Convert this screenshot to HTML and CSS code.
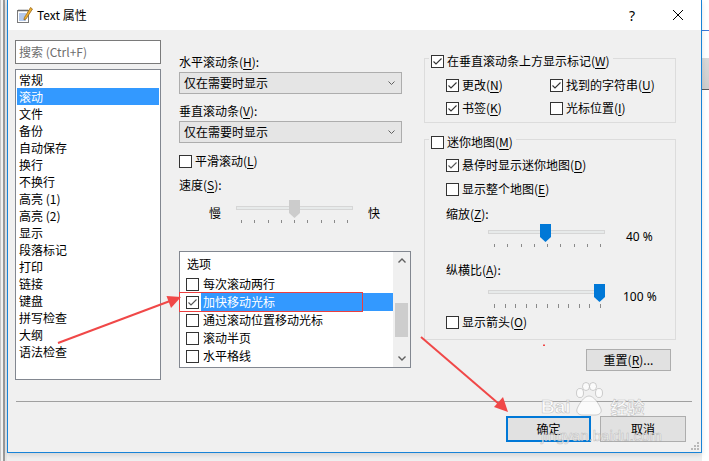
FILE: index.html
```html
<!DOCTYPE html>
<html lang="zh-CN">
<head>
<meta charset="utf-8">
<title>Text 属性</title>
<link rel="stylesheet" href="styles.css">
</head>
<body>
<div class="screen">
  <div class="bg-left"></div>
  <div class="dialog">
    <div class="titlebar">
      <svg class="app-icon" width="17" height="16" viewBox="0 0 17 16">
        <rect x="1.5" y="3.5" width="11" height="12" fill="#fff" stroke="#7a7a7a"/>
        <line x1="3" y1="7" x2="10" y2="7" stroke="#6b93d6"/>
        <line x1="3" y1="9" x2="9" y2="9" stroke="#6b93d6"/>
        <line x1="3" y1="11" x2="8" y2="11" stroke="#6b93d6"/>
        <line x1="3" y1="13" x2="10" y2="13" stroke="#6b93d6"/>
        <path d="M3 2.5v2M5 2.5v2M7 2.5v2M9 2.5v2M11 2.5v2" stroke="#555"/>
        <polygon points="14.5,0.5 16.5,2 10,12 8,13 8.3,10.8" fill="#f0b030" stroke="#8a5a10" stroke-width="0.7"/>
      </svg>
      <span class="title">Text 属性</span>
      <span class="cap-btn help">?</span>
      <span class="cap-btn close">
        <svg width="10" height="10" viewBox="0 0 10 10"><path d="M0 0L10 10M10 0L0 10" stroke="#000" stroke-width="1"/></svg>
      </span>
    </div>

    <div class="main">
      <div class="col-left">
        <div class="search">搜索 (Ctrl+F)</div>
        <ul class="catlist">
          <li>常规</li>
          <li class="sel">滚动</li>
          <li>文件</li>
          <li>备份</li>
          <li>自动保存</li>
          <li>换行</li>
          <li>不换行</li>
          <li>高亮 (1)</li>
          <li>高亮 (2)</li>
          <li>显示</li>
          <li>段落标记</li>
          <li>打印</li>
          <li>链接</li>
          <li>键盘</li>
          <li>拼写检查</li>
          <li>大纲</li>
          <li>语法检查</li>
        </ul>
      </div>

      <div class="col-mid">
        <div class="lbl">水平滚动条(<u>H</u>):</div>
        <div class="combo"><span>仅在需要时显示</span>
          <svg width="7" height="4" viewBox="0 0 7 4"><polyline points="0.5,0.5 3.5,3.5 6.5,0.5" fill="none" stroke="#606060"/></svg>
        </div>
        <div class="lbl mt9">垂直滚动条(<u>V</u>):</div>
        <div class="combo"><span>仅在需要时显示</span>
          <svg width="7" height="4" viewBox="0 0 7 4"><polyline points="0.5,0.5 3.5,3.5 6.5,0.5" fill="none" stroke="#606060"/></svg>
        </div>
        <div class="chk smooth"><span class="box"></span>平滑滚动(<u>L</u>)</div>
        <div class="lbl speed">速度(<u>S</u>):</div>
        <div class="speed-row">
          <span class="end slow">慢</span>
          <div class="slider">
            <div class="track"></div>
            <svg class="thumb thumb-mid" width="11" height="18" viewBox="0 0 11 18"><polygon points="0,0 11,0 11,13 5.5,18 0,13" fill="#cccccc"/></svg>
            <div class="ticks"><i></i><i></i><i></i><i></i><i></i><i></i><i></i><i></i><i></i></div>
          </div>
          <span class="end fast">快</span>
        </div>
        <div class="options">
          <div class="opt-list">
            <div class="opt-head">选项</div>
            <div class="opt"><span class="box"></span><span class="opt-text">每次滚动两行</span></div>
            <div class="opt"><span class="box"><svg width="11" height="11" viewBox="0 0 11 11"><polyline points="1.5,5.5 4,8 9.5,2.5" fill="none" stroke="#555" stroke-width="1.1"/></svg></span><span class="opt-text sel">加快移动光标</span></div>
            <div class="opt"><span class="box"></span><span class="opt-text">通过滚动位置移动光标</span></div>
            <div class="opt"><span class="box"></span><span class="opt-text">滚动半页</span></div>
            <div class="opt"><span class="box"></span><span class="opt-text">水平格线</span></div>
          </div>
          <div class="vscroll">
            <div class="arrow"><svg width="8" height="5" viewBox="0 0 8 5"><polyline points="0.5,4.5 4,1 7.5,4.5" fill="none" stroke="#606060" stroke-width="1.4"/></svg></div>
            <div class="vthumb"></div>
            <div class="arrow down"><svg width="8" height="5" viewBox="0 0 8 5"><polyline points="0.5,0.5 4,4 7.5,0.5" fill="none" stroke="#606060" stroke-width="1.4"/></svg></div>
          </div>
        </div>
      </div>

      <div class="col-right">
        <div class="group g1">
          <div class="chk legend"><span class="box"><svg width="11" height="11" viewBox="0 0 11 11"><polyline points="1.5,5.5 4,8 9.5,2.5" fill="none" stroke="#333" stroke-width="1.1"/></svg></span>在垂直滚动条上方显示标记(<u>W</u>)</div>
          <div class="grid2">
            <div class="chk"><span class="box"><svg width="11" height="11" viewBox="0 0 11 11"><polyline points="1.5,5.5 4,8 9.5,2.5" fill="none" stroke="#333" stroke-width="1.1"/></svg></span>更改(<u>N</u>)</div>
            <div class="chk"><span class="box"><svg width="11" height="11" viewBox="0 0 11 11"><polyline points="1.5,5.5 4,8 9.5,2.5" fill="none" stroke="#333" stroke-width="1.1"/></svg></span>找到的字符串(<u>U</u>)</div>
            <div class="chk"><span class="box"><svg width="11" height="11" viewBox="0 0 11 11"><polyline points="1.5,5.5 4,8 9.5,2.5" fill="none" stroke="#333" stroke-width="1.1"/></svg></span>书签(<u>K</u>)</div>
            <div class="chk"><span class="box"></span>光标位置(<u>I</u>)</div>
          </div>
        </div>

        <div class="group g2">
          <div class="chk legend"><span class="box"></span>迷你地图(<u>M</u>)</div>
          <div class="chk hover-row"><span class="box"><svg width="11" height="11" viewBox="0 0 11 11"><polyline points="1.5,5.5 4,8 9.5,2.5" fill="none" stroke="#555" stroke-width="1.1"/></svg></span>悬停时显示迷你地图(<u>D</u>)</div>
          <div class="chk whole-row"><span class="box"></span>显示整个地图(<u>E</u>)</div>
          <div class="lbl zoom-lbl">缩放(<u>Z</u>):</div>
          <div class="rslider-row">
            <div class="rslider">
              <div class="track"></div>
              <svg class="thumb thumb-zoom" width="11" height="18" viewBox="0 0 11 18"><polygon points="0,0 11,0 11,13 5.5,18 0,13" fill="#0078d7"/></svg>
              <div class="ticks"><i></i><i></i><i></i><i></i><i></i><i></i><i></i><i></i><i></i></div>
            </div>
            <span class="val">40 %</span>
          </div>
          <div class="lbl ratio-lbl">纵横比(<u>A</u>):</div>
          <div class="rslider-row ratio-row">
            <div class="rslider">
              <div class="track"></div>
              <svg class="thumb thumb-ratio" width="11" height="18" viewBox="0 0 11 18"><polygon points="0,0 11,0 11,13 5.5,18 0,13" fill="#0078d7"/></svg>
              <div class="ticks ticks-tall"><i></i><i></i><i></i><i></i><i></i><i></i><i></i><i></i><i></i><i></i><i></i></div>
            </div>
            <span class="val val-100">100 %</span>
          </div>
          <div class="chk arrow-row"><span class="box"></span>显示箭头(<u>O</u>)</div>
        </div>

        <div class="reset-row"><button class="btn reset">重置(<u>R</u>)...</button></div>
      </div>
    </div>

    <div class="sep"></div>
    <div class="buttons">
      <button class="btn default">确定</button>
      <button class="btn cancel">取消</button>
    </div>
    <svg class="grip" width="9" height="9" viewBox="0 0 9 9">
      <rect x="7" y="1" width="2" height="2" fill="#b8b8b8"/>
      <rect x="4" y="4" width="2" height="2" fill="#b8b8b8"/>
      <rect x="7" y="4" width="2" height="2" fill="#b8b8b8"/>
      <rect x="1" y="7" width="2" height="2" fill="#b8b8b8"/>
      <rect x="4" y="7" width="2" height="2" fill="#b8b8b8"/>
      <rect x="7" y="7" width="2" height="2" fill="#b8b8b8"/>
    </svg>
  </div>
  <div class="bg-right"></div>

  <div class="watermark">
    <div class="wm-top">
      <span class="wm-bai">Bai</span>
      <svg class="wm-paw" width="32" height="34" viewBox="0 0 32 34">
        <g fill="rgba(255,255,255,0.75)" stroke="rgba(150,150,150,0.55)" stroke-width="0.8">
          <ellipse cx="7" cy="11" rx="3.5" ry="4.5"/>
          <ellipse cx="13" cy="4.5" rx="3.5" ry="4"/>
          <ellipse cx="20" cy="4.5" rx="3.5" ry="4"/>
          <ellipse cx="26" cy="11" rx="3.5" ry="4.5"/>
          <path d="M16 14c-5 0-10 8-12 13-1 4 2 6 6 6h12c4 0 7-2 6-6-2-5-7-13-12-13z"/>
        </g>
      </svg>
      <span class="wm-jy">经验</span>
    </div>
    <div class="wm-url">jingyan.baidu.com</div>
  </div>

  <svg class="annot" width="709" height="461" viewBox="0 0 709 461">
    <rect x="179.5" y="292.5" width="183" height="19" fill="none" stroke="#ec3f3f" stroke-width="1"/>
    <line x1="58" y1="343" x2="170" y2="301" stroke="#f04848" stroke-width="2"/>
    <polygon points="181,297 166.5,296 171,308" fill="#f04848"/>
    <line x1="421" y1="337" x2="499" y2="404" stroke="#f04848" stroke-width="2"/>
    <polygon points="508,412 494,407 503,397" fill="#f04848"/>
    <rect x="543" y="344.5" width="2" height="1.5" fill="#f04848"/>
  </svg>
</div>
</body>
</html>
```

FILE: styles.css
```css
* { box-sizing: border-box; }

html, body {
  margin: 0;
  padding: 0;
}

body {
  width: 709px;
  height: 461px;
  overflow: hidden;
  background: #efefef;
  font-family: "Noto Sans CJK SC", "Noto Sans", sans-serif;
  font-size: 12px;
  color: #000;
}

u { text-decoration: underline; text-underline-offset: 2px; }

.screen {
  position: relative;
  display: flex;
  width: 709px;
  height: 461px;
  background: #efefef;
}

.bg-left {
  width: 7px;
  height: 461px;
  background: linear-gradient(to right, #c4c4c4 0, #c4c4c4 1px, #f2f2f2 1px, #f2f2f2 3px, #9a9a9a 3px, #9a9a9a 5px, #e6e6e6 5px);
}

.bg-right {
  width: 7px;
  height: 461px;
  background: linear-gradient(to bottom, #ffffff 0, #ffffff 30px, #3b78d8 30px, #3b78d8 31px, #ffffff 31px, #ffffff 58px, #d8d8d8 58px, #cdcdcd 89px, #5a5a5a 89px, #5a5a5a 90px, #ffffff 90px);
}

.dialog {
  position: relative;
  width: 695px;
  height: 453px;
  background: #f0f0f0;
  border: 1px solid #1883d7;
  border-top: none;
  display: flex;
  flex-direction: column;
  box-shadow: 0 2px 5px rgba(0, 0, 0, 0.12);
}

/* ---------- title bar ---------- */
.titlebar {
  height: 30px;
  background: #fff;
  display: flex;
  align-items: center;
  flex: none;
}

.app-icon { margin-left: 8px; flex: none; }

.title {
  margin-left: 4px;
  line-height: 16px;
  font-size: 12px;
}

.cap-btn {
  width: 46px;
  height: 30px;
  display: flex;
  align-items: center;
  justify-content: center;
}

.help {
  margin-left: auto;
  font-family: "Noto Sans", sans-serif;
  font-size: 14px;
}

/* ---------- main area ---------- */
.main {
  display: flex;
  height: 371px;
  padding-left: 7px;
  flex: none;
}

.col-left {
  width: 146px;
  padding-top: 10px;
  flex: none;
}

.search {
  height: 24px;
  border: 1px solid #7a7a7a;
  background: #fff;
  padding-left: 3px;
  line-height: 22px;
  color: #6d6d6d;
}

.catlist {
  margin: 5px 0 0;
  padding: 1px;
  list-style: none;
  height: 311px;
  border: 1px solid #828790;
  background: #fff;
}

.catlist li {
  height: 17px;
  line-height: 17px;
  padding-left: 2px;
  white-space: nowrap;
}

.catlist li.sel {
  background: #3399ff;
  color: #fff;
}

/* middle column */
.col-mid {
  width: 232px;
  margin-left: 18px;
  padding-top: 24px;
  flex: none;
}

.lbl {
  height: 16px;
  line-height: 16px;
}

.mt9 { margin-top: 9px; }

.combo {
  margin-top: 2px;
  width: 223px;
  height: 22px;
  background: #e5e5e5;
  border: 1px solid #adadad;
  display: flex;
  align-items: center;
  justify-content: space-between;
  padding: 0 6px 0 4px;
  line-height: 16px;
}

.chk {
  display: flex;
  align-items: center;
  height: 16px;
  line-height: 16px;
  white-space: nowrap;
}

.box {
  width: 13px;
  height: 13px;
  border: 1px solid #333;
  background: #fff;
  margin-right: 3px;
  flex: none;
  display: flex;
}

.smooth { margin-top: 10px; }
.speed { margin-top: 8px; }

.speed-row {
  display: flex;
  height: 33px;
}

.end {
  line-height: 16px;
  padding-top: 12px;
  width: 12px;
}

.slow { margin-left: 30px; }
.fast { margin-left: 15px; }

.slider {
  position: relative;
  width: 117px;
  height: 33px;
  margin-left: 15px;
}

.track {
  margin-top: 13px;
  height: 4px;
  background: #e7eaea;
  border: 1px solid #d6d6d6;
}

.ticks {
  display: flex;
  justify-content: space-between;
  margin: 10px 0 0 5px;
  width: 107px;
}

.ticks i {
  display: block;
  width: 1px;
  height: 3px;
  background: #8a8a8a;
}

.thumb { position: absolute; }
.thumb-mid { left: 53px; top: 7px; }

.options {
  margin-top: 25px;
  width: 232px;
  height: 117px;
  border: 1px solid #828790;
  background: #fff;
  display: flex;
}

.opt-list {
  flex: 1;
  padding-top: 3px;
}

.opt-head {
  line-height: 18px;
  height: 18px;
  padding-left: 7px;
  margin-bottom: 2px;
}

.opt {
  display: flex;
  align-items: center;
  height: 18px;
  padding-left: 6px;
}

.opt .box { margin-right: 2px; }

.opt-text {
  flex: 1;
  height: 18px;
  line-height: 18px;
  padding-left: 2px;
  white-space: nowrap;
}

.opt-text.sel {
  background: #3399ff;
  color: #fff;
}

.vscroll {
  width: 17px;
  background: #f0f0f0;
  display: flex;
  flex-direction: column;
  align-items: center;
  flex: none;
}

.arrow {
  height: 17px;
  display: flex;
  align-items: center;
  justify-content: center;
  flex: none;
}

.arrow.down { margin-top: auto; }

.vthumb {
  margin-top: 34px;
  width: 13px;
  height: 34px;
  background: #cdcdcd;
}

/* right column */
.col-right {
  width: 252px;
  margin-left: 13px;
  padding-top: 28px;
  flex: none;
}

.group {
  border: 1px solid #dcdcdc;
  padding-left: 21px;
}

.legend {
  margin-top: -6px;
  margin-left: -17px;
  padding: 0 3px 0 2px;
  width: max-content;
  background: #f0f0f0;
}

.g1 { padding-bottom: 6px; }

.grid2 {
  display: grid;
  grid-template-columns: 104px auto;
  row-gap: 7px;
  margin-top: 8px;
}

.g2 {
  margin-top: 16px;
  padding-bottom: 9px;
}

.hover-row { margin-top: 7px; }
.whole-row { margin-top: 8px; }
.zoom-lbl { margin-top: 9px; }
.ratio-lbl { margin-top: 14px; }
.ratio-row { margin-top: 4px; }
.arrow-row { margin-top: 6px; }

.rslider-row {
  display: flex;
  height: 26px;
}

.rslider {
  position: relative;
  width: 117px;
  height: 26px;
  margin-left: 42px;
}

.rslider .track { margin-top: 8px; }
.rslider .ticks { margin: 10px 0 0 6px; width: 107px; }
.rslider .ticks-tall i { height: 4px; }

.thumb-zoom { left: 52px; top: 2px; }
.thumb-ratio { left: 106px; top: 2px; }

.val {
  line-height: 16px;
  padding-top: 7px;
  margin-left: 21px;
  font-family: "Noto Sans", sans-serif;
  font-size: 12px;
  white-space: nowrap;
}

.val-100 { margin-left: 18px; }

.reset-row {
  display: flex;
  justify-content: flex-end;
  margin-top: 9px;
  padding-right: 5px;
}

.btn {
  background: #e1e1e1;
  border: 1px solid #adadad;
  font-family: inherit;
  font-size: 12px;
  color: #000;
  padding: 0;
  margin: 0;
  line-height: 16px;
}

.reset {
  width: 85px;
  height: 22px;
}

/* bottom */
.sep {
  height: 1px;
  background: #a0a0a0;
  margin: 0 9px 0 8px;
  flex: none;
}

.buttons {
  display: flex;
  justify-content: flex-end;
  gap: 9px;
  margin-top: 14px;
  padding-right: 15px;
}

.buttons .btn {
  height: 26px;
}

.default {
  width: 85px;
  border: 2px solid #0078d7;
}

.cancel { width: 86px; }

.grip {
  position: absolute;
  right: 2px;
  bottom: 2px;
}

/* overlays */
.annot {
  position: absolute;
  left: 0;
  top: 0;
  pointer-events: none;
}

.watermark {
  position: absolute;
  left: 541px;
  top: 382px;
  pointer-events: none;
  color: rgba(255, 255, 255, 0.75);
  -webkit-text-stroke: 0.6px rgba(150, 150, 150, 0.55);
}

.wm-top {
  display: flex;
  align-items: flex-end;
  height: 34px;
}

.wm-bai {
  font-family: "Liberation Sans", sans-serif;
  font-weight: bold;
  font-size: 19px;
  line-height: 19px;
}

.wm-paw { margin-left: 2px; }

.wm-jy {
  font-size: 17px;
  line-height: 19px;
  margin-left: 6px;
  font-weight: bold;
}

.wm-url {
  font-family: "Liberation Sans", sans-serif;
  font-size: 15px;
  line-height: 16px;
  margin-top: 12px;
}
```
